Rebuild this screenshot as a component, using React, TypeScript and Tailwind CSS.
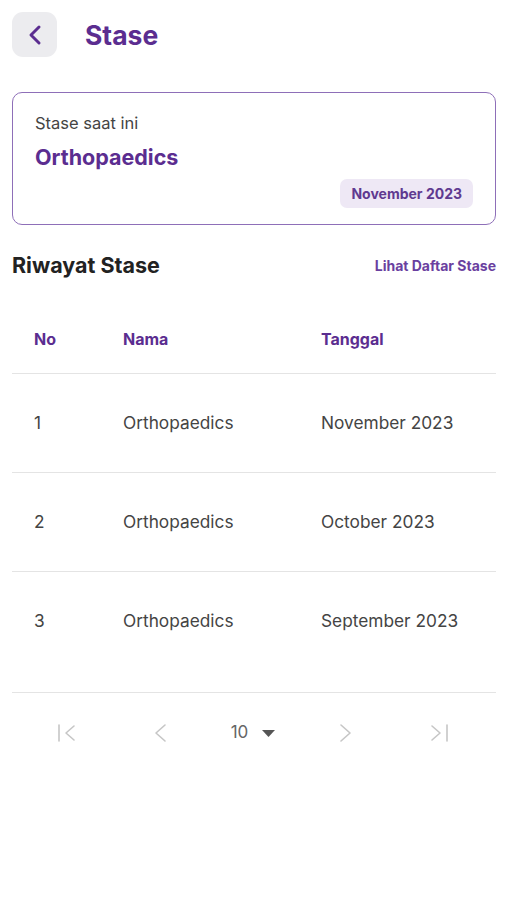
const rows = [
  { no: 1, nama: 'Orthopaedics', tanggal: 'November 2023' },
  { no: 2, nama: 'Orthopaedics', tanggal: 'October 2023' },
  { no: 3, nama: 'Orthopaedics', tanggal: 'September 2023' },
]

function FirstIcon() {
  return (
    <svg width="20" height="20" viewBox="0 0 20 20" fill="none" stroke="#c6c6c6" strokeWidth="1.6" strokeLinecap="round" strokeLinejoin="round">
      <path d="M2 2v16" />
      <path d="M17 3l-8 7 8 7" />
    </svg>
  )
}

function LastIcon() {
  return (
    <svg width="20" height="20" viewBox="0 0 20 20" fill="none" stroke="#c6c6c6" strokeWidth="1.6" strokeLinecap="round" strokeLinejoin="round">
      <path d="M18 2v16" />
      <path d="M3 3l8 7-8 7" />
    </svg>
  )
}

function PrevIcon() {
  return (
    <svg width="14" height="20" viewBox="0 0 14 20" fill="none" stroke="#c6c6c6" strokeWidth="1.6" strokeLinecap="round" strokeLinejoin="round">
      <path d="M12 2L3 10l9 8" />
    </svg>
  )
}

function NextIcon() {
  return (
    <svg width="14" height="20" viewBox="0 0 14 20" fill="none" stroke="#c6c6c6" strokeWidth="1.6" strokeLinecap="round" strokeLinejoin="round">
      <path d="M2 2l9 8-9 8" />
    </svg>
  )
}

export default function App() {
  return (
    <div className="min-h-[902px] w-[520px] bg-white pl-3 pr-6 pt-3 font-['Inter','Liberation_Sans',sans-serif]">
      {/* Header */}
      <div className="flex items-center gap-[28px]">
        <button className="flex h-[45px] w-[45px] items-center justify-center rounded-[11px] bg-[#ececef]">
          <svg width="18" height="24" viewBox="0 0 18 24" fill="none" stroke="#5b2d90" strokeWidth="3" strokeLinecap="round" strokeLinejoin="round">
            <path d="M13 4L5 12l8 8" />
          </svg>
        </button>
        <h1 className="text-[26.5px] font-bold leading-[36px] text-[#5b2d90]">Stase</h1>
      </div>

      {/* Current stase card */}
      <div className="mt-[35px] h-[133px] rounded-[10px] border-[1.5px] border-[#8e6fb8] px-[22px] pt-[20px]">
        <div className="text-[16.5px] leading-[20px] text-[#444]">Stase saat ini</div>
        <div className="mt-[10px] text-[21.5px] font-bold leading-[28px] text-[#5b2d90]">Orthopaedics</div>
        <div className="mt-[8px] flex justify-end">
          <span className="rounded-[7px] bg-[#eee8f5] px-[11px] py-[6px] text-[14px] font-bold leading-[17px] text-[#5f3a90]">
            November 2023
          </span>
        </div>
      </div>

      {/* Riwayat */}
      <div className="mt-[26px] flex items-center justify-between">
        <h2 className="text-[21.5px] font-bold leading-[28px] text-[#222]">Riwayat Stase</h2>
        <button className="text-[14px] font-bold text-[#6a3fa0]">Lihat Daftar Stase</button>
      </div>

      {/* Table */}
      <div className="mt-[25px] border-b border-[#e4e4e4] pb-[22px]">
        <div className="grid h-[70px] grid-cols-[89px_198px_1fr] items-center border-b border-[#e4e4e4] pl-[22px] text-[16px] font-bold text-[#5b2d90]">
          <div>No</div>
          <div>Nama</div>
          <div>Tanggal</div>
        </div>
        {rows.map((row, i) => (
          <div
            key={row.no}
            className={
              i < rows.length - 1
                ? 'grid h-[99px] grid-cols-[89px_198px_1fr] items-center border-b border-[#e4e4e4] pl-[22px] text-[17.3px] text-[#444]'
                : 'grid h-[98px] grid-cols-[89px_198px_1fr] items-center pl-[22px] text-[17.3px] text-[#444]'
            }
          >
            <div>{row.no}</div>
            <div>{row.nama}</div>
            <div>{row.tanggal}</div>
          </div>
        ))}
      </div>

      {/* Pagination */}
      <div className="ml-[8px] grid h-[80px] w-[466px] grid-cols-5 items-center justify-items-center">
        <FirstIcon />
        <PrevIcon />
        <div className="flex items-center gap-[14px]">
          <span className="text-[17px] text-[#666]">10</span>
          <svg width="13" height="7" viewBox="0 0 13 7">
            <path d="M0 0h13L6.5 7z" fill="#555" />
          </svg>
        </div>
        <NextIcon />
        <LastIcon />
      </div>
    </div>
  )
}
